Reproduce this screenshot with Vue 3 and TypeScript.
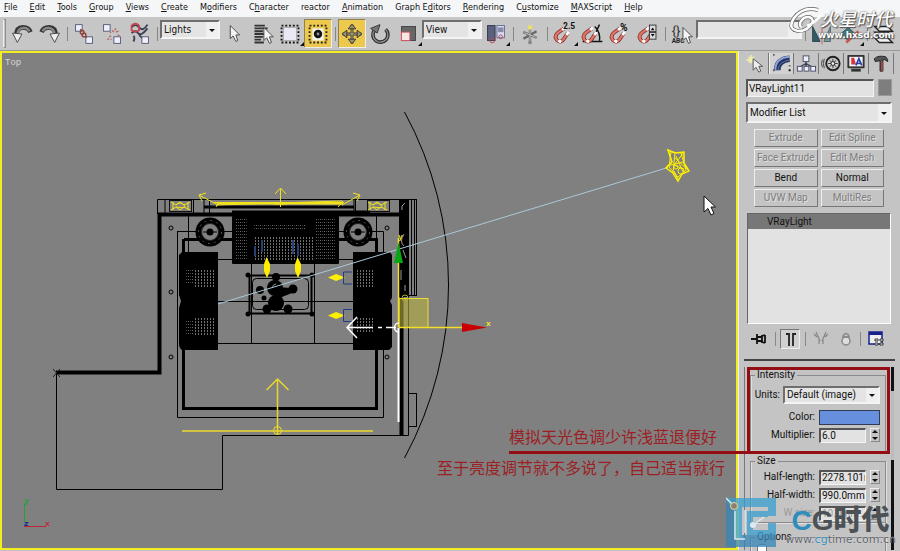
<script setup lang="ts">
import { ref } from 'vue'

interface Tool {
  kind: 'tool' | 'sep' | 'select' | 'combo'
  label?: string
  icon?: string
  active?: boolean
  flyout?: boolean
  value?: string
}

const menus: [string, string, string][] = [
  ['', 'F', 'ile'], ['', 'E', 'dit'], ['', 'T', 'ools'], ['', 'G', 'roup'], ['', 'V', 'iews'],
  ['', 'C', 'reate'], ['M', 'o', 'difiers'], ['C', 'h', 'aracter'], ['reactor', '', ''],
  ['', 'A', 'nimation'], ['Graph E', 'd', 'itors'], ['', 'R', 'endering'], ['C', 'u', 'stomize'],
  ['', 'M', 'AXScript'], ['', 'H', 'elp'],
]

const magnet = '<path d="M14 10L7 15Q3 19 7 23Q11 26 14 21L18 15" fill="none" stroke="#7a2a24" stroke-width="4"/><path d="M14 10L7 15Q3 19 7 23Q11 26 14 21L18 15" fill="none" stroke="#e0766a" stroke-width="2.500"/><path d="M12 11.500l3-2M16.500 17l2.500-3M8 23l3 1.500" stroke="#fff" stroke-width="3"/>'
const box = (x: number, y: number) => `<rect x="${x}" y="${y}" width="7" height="7" fill="#eef0fb" stroke="#565a78"/>`
const arrow = (x: number, y: number) => `<path transform="translate(${x} ${y})" d="M0 0V14L3 11L6 17L8 16L6 10H10Z" fill="#f4f4f4" stroke="#444"/>`

const icons: Record<string, string> = {
  undo: '<path d="M8 18Q8 9 15 9Q21 9 23 14" fill="none" stroke="#333" stroke-width="5"/><path d="M9 16Q10 10 15 9.500Q20 9 22 13" fill="none" stroke="#888" stroke-width="2.500"/><path d="M4 15L9 25L14 16Z" fill="#eee" stroke="#444"/>',
  redo: '<path d="M20 18Q20 9 13 9Q7 9 5 14" fill="none" stroke="#333" stroke-width="5"/><path d="M19 16Q18 10 13 9.500Q8 9 6 13" fill="none" stroke="#888" stroke-width="2.500"/><path d="M24 15L19 25L14 16Z" fill="#eee" stroke="#444"/>',
  link: box(5, 6) + box(16, 19) + '<g fill="none" stroke="#8f4340" stroke-width="1.500"><circle cx="12" cy="14" r="2"/><circle cx="14" cy="17" r="2"/><path d="M10 11l2 2M15 18l2 2"/></g>',
  unlink: box(5, 6) + box(16, 19) + '<path d="M14 12l2 2M18 10l-1 2M21 13l-3 1M20 17l2 1M12 14l1 1M11 19l2-1M9 22l2-1M13 22v-1" stroke="#b76a68" stroke-width="1.500"/>',
  bind: '<g fill="none" stroke="#3c4056" stroke-width="2"><path d="M5 9Q9 4 13 9T22 6M5 15Q9 11 12 15T22 10M7 24Q9 20 7 18M13 17l4 4"/></g><path d="M5 7Q9 3 13 7V12Q9 15 5 12Z" fill="none" stroke="#c5434b" stroke-width="1.800"/>' + box(16, 19),
  pick: arrow(10, 7),
  byname: '<path d="M6 7H17M6 10H20M6 13H15M6 16H17M6 19H15M6 22H13M6 25H16" stroke="#333" stroke-width="2"/>' + arrow(16, 9),
  region: '<rect x="7" y="9" width="14" height="14" fill="#e8e9f5" stroke="#aaa"/><rect x="5" y="7" width="18" height="18" fill="none" stroke="#111" stroke-width="2" stroke-dasharray="2 2"/>',
  crossing: '<rect x="8" y="10" width="12" height="13" fill="#f3f3e6"/><rect x="5" y="7" width="18" height="18" fill="none" stroke="#222" stroke-width="2" stroke-dasharray="2 2"/><circle cx="14" cy="16" r="4.500" fill="#111"/><circle cx="14" cy="16" r="1.500" fill="#8d93ad"/>',
  move: '<path d="M14 6V26M4 16H24" stroke="#333" stroke-width="3"/><path d="M14 6V26M4 16H24" stroke="#c9bd83"/><path d="M10 10.500L14 5.500L18 10.500ZM10 21.500L14 26.500L18 21.500ZM8.500 12L3.500 16L8.500 20ZM19.500 12L24.500 16L19.500 20Z" fill="#9b946f" stroke="#333"/>',
  rotate: '<path d="M8 12A8 8 0 1 0 20 11" fill="none" stroke="#333" stroke-width="4"/><path d="M8 12A8 8 0 1 0 20 11" fill="none" stroke="#999" stroke-width="1.200"/><path d="M4 10L14 6L11 15Z" fill="#777" stroke="#333"/>',
  scale: '<rect x="7" y="8" width="15" height="15" fill="#666" stroke="#444"/><rect x="7" y="14" width="9" height="9" fill="#f7e6e6" stroke="#d4525c"/>',
  pivot: '<rect x="5" y="7" width="8" height="16" fill="#59617c" stroke="#30364d"/><rect x="15" y="7" width="8" height="13" fill="#d7daf0" stroke="#666d96"/><path d="M16 9h6v5h-6z" fill="#868caa"/><circle cx="10" cy="23" r="2.500" fill="none" stroke="#bd4753"/><circle cx="19" cy="19" r="2" fill="none" stroke="#bd4753"/>',
  manip: '<path d="M14 9V25M7 14L21 20M7 21L21 13" stroke="#666" stroke-width="2.500"/><path d="M14 10V24M8 14.500L20 19.500" stroke="#ccc"/><circle cx="14" cy="9" r="2.500" fill="#e8e06a"/><circle cx="14" cy="25" r="2" fill="#888"/>',
  snap: magnet + '<text x="13" y="11" font-size="9" font-weight="700" fill="#111">2.5</text>',
  angle: '<path d="M4 24H25M14 23L22 6M22 23A18 18 0 0 0 17 8" fill="none" stroke="#111" stroke-width="1.500"/>' + magnet,
  percent: magnet + '<text x="14" y="13" font-size="11" font-weight="700" fill="#111">%</text>',
  spinner: magnet + '<rect x="15.500" y="6.500" width="7" height="7" fill="#ddd" stroke="#333"/><rect x="15.500" y="14.500" width="7" height="7" fill="#ddd" stroke="#333"/><path d="M17 12l2-3 2 3zM17 16l2 3 2-3z" fill="#111"/>',
  named: '<text x="3" y="17" font-size="14" fill="#333">{}</text><text x="3" y="26" font-size="7" font-weight="700" fill="#222">ABC</text>' + arrow(15, 9),
  mirror: '<path d="M4 8V24H12Z" fill="#345b63" stroke="#29464c"/><path d="M23 8V24H16Z" fill="#78969d" stroke="#4d6a70"/><path d="M14 5V27" stroke="#d0605c"/>',
  align: '<path d="M4 16L12 9L20 16L12 23Z" fill="#3f7a80" stroke="#28565b"/><path d="M10 25L23 13" stroke="#c65855" stroke-width="3"/>',
  layers: '<g fill="#f1f1f1" stroke="#222" stroke-width="1.500"><path d="M4 20h14l5 5H9z"/><path d="M4 14h14l5 5H9z"/><path d="M4 8h14l5 5H9z"/></g>',
}

const tools: Tool[] = [
  { kind: 'tool', label: 'Undo', icon: 'undo' },
  { kind: 'tool', label: 'Redo', icon: 'redo' },
  { kind: 'sep' },
  { kind: 'tool', label: 'Select and Link', icon: 'link' },
  { kind: 'tool', label: 'Unlink Selection', icon: 'unlink' },
  { kind: 'tool', label: 'Bind to Space Warp', icon: 'bind' },
  { kind: 'sep' },
  { kind: 'select', label: 'Selection Filter', value: 'Lights' },
  { kind: 'tool', label: 'Select Object', icon: 'pick' },
  { kind: 'tool', label: 'Select by Name', icon: 'byname' },
  { kind: 'tool', label: 'Selection Region', icon: 'region', flyout: true },
  { kind: 'tool', label: 'Window/Crossing', icon: 'crossing', active: true },
  { kind: 'sep' },
  { kind: 'tool', label: 'Select and Move', icon: 'move', active: true },
  { kind: 'tool', label: 'Select and Rotate', icon: 'rotate' },
  { kind: 'tool', label: 'Select and Scale', icon: 'scale', flyout: true },
  { kind: 'select', label: 'Reference Coordinate System', value: 'View' },
  { kind: 'tool', label: 'Use Pivot Point Center', icon: 'pivot', flyout: true },
  { kind: 'sep' },
  { kind: 'tool', label: 'Select and Manipulate', icon: 'manip' },
  { kind: 'sep' },
  { kind: 'tool', label: 'Snaps Toggle', icon: 'snap', flyout: true },
  { kind: 'tool', label: 'Angle Snap', icon: 'angle' },
  { kind: 'tool', label: 'Percent Snap', icon: 'percent' },
  { kind: 'tool', label: 'Spinner Snap', icon: 'spinner' },
  { kind: 'sep' },
  { kind: 'tool', label: 'Edit Named Selection Sets', icon: 'named' },
  { kind: 'combo', label: 'Named Selection Sets', value: '' },
  { kind: 'sep' },
  { kind: 'tool', label: 'Mirror', icon: 'mirror' },
  { kind: 'tool', label: 'Align', icon: 'align', flyout: true },
  { kind: 'sep' },
  { kind: 'tool', label: 'Layer Manager', icon: 'layers' },
]

const tabs = [
  { label: 'Create', icon: '<path d="M6 2v9M1 7h9M3 4l6 6M9 4l-6 6" stroke="#f5efb0" stroke-width="1.500"/><path d="M8 6V18L11 15L14 20L16 19L14 14H18Z" fill="#eee" stroke="#555"/>' },
  { label: 'Modify', icon: '<path d="M6 18Q6 7 19 6" fill="none" stroke="#26335e" stroke-width="7"/><path d="M4 18Q4 5 19 4" fill="none" stroke="#8fa3d8" stroke-width="2"/><path d="M7 18Q7 9 19 7.500" fill="none" stroke="#5d71ab"/><path d="M2 2h1M18 18h2M2 18h1M19 13v1" stroke="#111" stroke-width="2"/>' },
  { label: 'Hierarchy', icon: '<path d="M11 8V12M11 11L4 15M11 11L18 15M11 11V15" stroke="#3b3f55" stroke-width="1.500"/><g fill="#eceefa" stroke="#4c5068"><rect x="8" y="3" width="6" height="6"/><rect x="2" y="14" width="5" height="5"/><rect x="9" y="14" width="5" height="5"/><rect x="16" y="14" width="5" height="5"/></g>' },
  { label: 'Motion', icon: '<circle cx="13" cy="11" r="7" fill="#ccc" stroke="#222" stroke-width="2"/><path d="M13 6V16M8 11H18M9.500 7.500L16.500 14.500M16.500 7.500L9.500 14.500" stroke="#333"/><circle cx="13" cy="11" r="2" fill="#eee" stroke="#222"/><path d="M4 6Q2 11 4 16M2 7Q0 11 2 15" fill="none" stroke="#444"/>' },
  { label: 'Display', icon: '<rect x="2" y="2" width="18" height="14" rx="1" fill="#333"/><rect x="4" y="4" width="14" height="10" fill="#f4f4fb"/><path d="M6 5h3l2 7H6z" fill="#d6353c"/><path d="M11 13L14 6L17 13M12 11h4" fill="none" stroke="#2b3fa6" stroke-width="1.800"/><path d="M6 18h10" stroke="#333" stroke-width="3"/>' },
  { label: 'Utilities', icon: '<path d="M4 6Q8 2 16 4L18 7V9L15 7H13V19H10V8L5 9Z" fill="#555" stroke="#222"/><path d="M12 9V19" stroke="#b34b48" stroke-width="1.500"/>' },
]

const modifierButtons = [
  { label: 'Extrude', enabled: false }, { label: 'Edit Spline', enabled: false },
  { label: 'Face Extrude', enabled: false }, { label: 'Edit Mesh', enabled: false },
  { label: 'Bend', enabled: true }, { label: 'Normal', enabled: true },
  { label: 'UVW Map', enabled: false }, { label: 'MultiRes', enabled: false },
]

const stackTools = [
  { label: 'Pin Stack', pressed: false, icon: '<path d="M1 10H7M7 5V15M7 8H12M7 12H12M12 6V14M15 6V14M12 7L15 6M12 13L15 14" stroke="#111" stroke-width="1.800" fill="none"/>' },
  { label: 'Show end result', pressed: true, icon: '<path d="M5 4H8V16M15 4H12V16" stroke="#222" stroke-width="1.800" fill="none"/>' },
  { label: 'Make unique', pressed: false, icon: '<path d="M5 3L9 12M15 3L11 12M3 5l3 3M17 5l-3 3M8 11V15M12 11V15" stroke="#858585" stroke-width="1.200" fill="none"/>' },
  { label: 'Remove modifier', pressed: false, icon: '<circle cx="10" cy="12" r="4" stroke="#888" stroke-width="1.500" fill="#ddd"/><path d="M7 7Q10 2 13 7M6 8H14" stroke="#888" stroke-width="1.500" fill="none"/>' },
  { label: 'Configure Modifier Sets', pressed: false, icon: '<rect x="3" y="3" width="13" height="12" fill="#eee" stroke="#18208c" stroke-width="1.500"/><path d="M3 4.500H16" stroke="#18208c" stroke-width="3"/><path d="M9 10h3v2h-3zM14 10h3v2h-3zM9 14h3v2h-3zM14 14h3v2h-3z" fill="#fff" stroke="#333"/>' },
]

const objectName = ref('VRayLight11')
const multiplier = ref('6.0')
const sizes = ref([
  { id: 'half-length', label: 'Half-length:', value: '2278.101mm', dim: false },
  { id: 'half-width', label: 'Half-width:', value: '990.0mm', dim: false },
  { id: 'w-size', label: 'W size:', value: '10.0mm', dim: true },
])
const screws = [[171, 228], [171, 292], [171, 357], [387, 228], [387, 357]]
</script>

<template>
  <div class="app">
    <nav class="menubar">
      <a v-for="m in menus" :key="m.join('')" href="#">{{ m[0] }}<u v-if="m[1]">{{ m[1] }}</u>{{ m[2] }}</a>
    </nav>

    <header class="toolbar">
      <span class="grip"></span>
      <template v-for="(t, i) in tools" :key="i">
        <span v-if="t.kind === 'sep'" class="sep"></span>
        <button v-else-if="t.kind === 'tool'" class="tool" :class="{ active: t.active }" :aria-label="t.label">
          <svg viewBox="0 0 28 32" width="28" height="30" v-html="icons[t.icon!]"></svg>
          <i v-if="t.flyout" class="flyout"></i>
        </button>
        <span v-else class="drop" :class="t.kind">
          <select :aria-label="t.label"><option>{{ t.value }}</option></select>
          <i class="caret"></i>
        </span>
      </template>
      <div class="brand">
        <svg viewBox="0 0 34 28" width="34" height="28">
          <path d="M29 3Q14 -1 5 11Q-2 22 9 24Q20 24 24 14Q22 8 15 11Q9 16 12 20" fill="none" stroke="#666" stroke-width="4" />
          <path d="M29 3Q14 -1 5 11Q-2 22 9 24Q20 24 24 14Q22 8 15 11Q9 16 12 20M18 19Q26 16 32 8" fill="none" stroke="#fff" stroke-width="2.500" />
        </svg>
        <div class="brand-text"><b>火星时代</b><small>www.hxsd.com</small></div>
      </div>
    </header>

    <main class="work">
      <section class="viewport">
        <svg class="scene" viewBox="2 53 734 495" preserveAspectRatio="xMinYMin meet">
          <defs>
            <pattern id="mesh" width="3" height="3" patternUnits="userSpaceOnUse">
              <rect width="3" height="3" fill="#000" /><rect width="1" height="2" fill="#707070" />
            </pattern>
            <pattern id="mesh-fine" width="4" height="3" patternUnits="userSpaceOnUse">
              <rect width="4" height="3" fill="#000" /><rect width="1" height="1" fill="#666" /><rect x="2" width="1" height="1" fill="#444" />
            </pattern>
          </defs>

          <text x="5" y="65" class="view-name">Top</text>

          <!-- walls -->
          <g fill="none" stroke="#000">
            <path d="M157.500 214V199.500H416M56.500 373V489.500H222.500V435.500H408.500V199M193.500 200V213M204 200V213M209.500 200V213M355.500 200V213M400 200V213M165 200V213M354 200V213" />
            <path d="M56 372.500H159.500V214.500H400" stroke-width="4" />
            <path d="M401.500 297V435" stroke-width="4" />
            <rect x="408.500" y="199.500" width="8" height="96" /><path d="M411.500 200V295M414.500 200V295" />
            <rect x="408.500" y="393.500" width="8" height="33" />
            <path d="M404.500 112A362 362 0 0 1 404.500 458" />
            <path d="M177.500 231V417.500H383.500V231.500H177M188.500 216V252M376.500 216V252" />
            <path d="M184 239.500H376.500V408.500H183.500V239" stroke-width="3" />
            <path d="M251.500 263V343M314.500 263V343M218 301.500H353M218 343.500H353M218 259.500H232M339 259.500H353" />
            <path d="M53 369L60 377M60 369L53 377" stroke="#222" />
            <path d="M204 207H354M232 212H370" stroke-width="3" />
            <circle v-for="(s, i) in screws" :key="i" :cx="s[0]" :cy="s[1]" r="2" />
          </g>
          <path d="M399 200H408V297H399Z" />
          <path d="M402 210v-4l3-3M404 234q-5 8 0 12M403 250l3 8M401 270v10M405 285v6" fill="none" stroke="#999" />

          <!-- sofa and armchairs -->
          <rect x="232" y="216" width="107" height="48" rx="1" />
          <rect x="235" y="219" width="12" height="42" fill="url(#mesh-fine)" />
          <rect x="253" y="223" width="52" height="8" fill="url(#mesh-fine)" />
          <rect x="253" y="236" width="62" height="24" fill="url(#mesh)" />
          <rect x="316" y="219" width="20" height="42" fill="url(#mesh-fine)" />
          <path d="M255 246V256M262 240V252M293 240V254M298 244V256" stroke="#273f73" stroke-width="2" />
          <path d="M182 252H218V350H182Q179 348 179 344V308L181 301L179 295V255Z" />
          <path d="M353 252H390L392 255V298L390 301L392 305V347L389 350H353Z" />
          <rect x="186" y="270" width="7" height="15" fill="url(#mesh-fine)" /><rect x="195" y="269" width="20" height="18" fill="url(#mesh)" />
          <rect x="186" y="320" width="7" height="15" fill="url(#mesh-fine)" /><rect x="195" y="318" width="20" height="17" fill="url(#mesh)" />
          <rect x="357" y="269" width="17" height="18" fill="url(#mesh)" /><rect x="357" y="318" width="17" height="15" fill="url(#mesh)" />

          <!-- lamps -->
          <g v-for="x in [210, 358]" :key="x">
            <circle :cx="x" cy="232" r="14.500" /><circle :cx="x" cy="232" r="8.500" fill="#808080" stroke="#222" stroke-width="1" />
            <circle :cx="x" cy="232" r="11.500" fill="none" stroke="#555" stroke-dasharray="2 4" />
            <circle :cx="x" cy="232" r="3.500" /><path :d="`M${x - 7} 232H${x + 7}`" stroke="#000" stroke-width="1" />
          </g>

          <!-- coffee table -->
          <rect x="249.500" y="275.500" width="62" height="38" fill="none" stroke="#000" stroke-width="2" />
          <rect x="252.500" y="278.500" width="56" height="31" rx="4" fill="none" stroke="#000" />
          <circle v-for="(p, i) in [[248, 275], [312, 275], [248, 314], [312, 314]]" :key="i" :cx="p[0]" :cy="p[1]" r="2.500" />
          <g>
            <circle cx="276" cy="277" r="4" /><circle cx="275" cy="288" r="8" /><circle cx="260" cy="290" r="4" />
            <circle cx="293" cy="289" r="4.500" /><circle cx="264" cy="298" r="2.500" /><circle cx="276" cy="303" r="8" />
            <circle cx="267" cy="309" r="4.500" /><circle cx="288" cy="309" r="4.500" /><path d="M277 287L291 288L292 293L277 299Z" />
          </g>
          <path d="M272 288q1-4 4-4" fill="none" stroke="#888" />

          <!-- target line of the selected light -->
          <path d="M218 304L668 167.500" stroke="#a9cad9" fill="none" />

          <!-- small lights -->
          <g fill="#ffee00">
            <path d="M266.500 257L270 264V271L267 278L264 271V264Z" /><path d="M297.500 257L301 264V271L298 278L295 271V264Z" />
            <path d="M328 277.500L336 274L345 277.500L336 281Z" /><path d="M328 315.500L336 312L345 315.500L336 319Z" />
          </g>
          <path d="M352 272H343.500V284H352M352 309.500H343.500V321.500H352" fill="none" stroke="#1f3c85" />

          <!-- yellow window lights -->
          <g fill="none" stroke="#f2e21c">
            <rect x="169.500" y="200.500" width="22" height="11" stroke="#111" /><rect x="367.500" y="200.500" width="22" height="11" stroke="#111" />
            <path d="M171 202L176 205L180 202L184 205L190 202M171 210L176 207L180 210L184 207L190 210M173 202V210M188 202V210M176 205Q180 201 184 205T176 207" />
            <path d="M368 202L373 205L377 202L381 205L387 202M368 210L373 207L377 210L381 207L387 210M370 202V210M385 202V210M373 205Q377 201 381 205T373 207" />
            <path d="M214 202.500H344M216 205L342 201M216 207L219 202M338 207L343 201" /><path d="M217 203.500H343" stroke-width="2" />
            <path d="M280.500 207V189M275 194L280.500 188L286 194M274 204H287" />
            <path d="M218 205L199 195M206 193L199 195L202 201M342 205L360 195M353 193L360 195L357 201" />
            <path d="M182 431H373M277.500 434V379M266.500 390L277.500 379L288.500 390" stroke-width="1.500" stroke="#e8d72b" />
            <circle cx="277.500" cy="430.500" r="4" />
          </g>

          <!-- target star -->
          <g fill="none" stroke="#fff000">
            <path d="M668 150L675 153L684 152L684 163L689 171L682 174L678 181L673 173L666 168L672 162Z" stroke-width="1.500" />
            <path d="M668 150L672 162M675 153L673 172M684 152L674 165L684 169M676 156L683 172M667 166L683 162M678 179L674 171M671 152L681 153L686 170L678 177L669 167Z M674 157L689 171" />
            <circle cx="681" cy="171" r="3" /><circle cx="676" cy="167" r="2" />
          </g>

          <!-- move gizmo -->
          <path d="M398.500 328V422" stroke="#fff" stroke-width="2" />
          <rect x="399" y="298.500" width="29" height="29" fill="#b7b13d" fill-opacity=".6" stroke="#e9df30" />
          <path d="M398.500 327V238M399 327.500H463" stroke="#f3df25" stroke-width="1.500" />
          <circle cx="405" cy="298" r="3" fill="none" stroke="#b6aa29" />
          <path d="M398.500 242L403 263H394Z" fill="#08a514" /><path d="M462 323V332L487 327.500Z" fill="#c90000" />
          <path d="M347 327.500H373M378 327.500H382M386 327.500H396M357 317L347 327.500L357 338M399 323A4 4 0 0 0 399 332" fill="none" stroke="#fff" stroke-width="1.500" />
          <text x="398" y="239" class="axis yellow">y</text><text x="486" y="326" class="axis yellow">x</text>

          <!-- world axis -->
          <path d="M24.500 526V503" stroke="#25a036" /><path d="M24 526.500H46" stroke="#c02734" />
          <text x="24" y="503" class="axis green">y</text><text x="45" y="526" class="axis red">x</text><text x="24" y="526" class="axis blue">z</text>

          <path d="M704 196V212L708 208.500L711 215L714 213.500L711 207H715.500Z" fill="#fff" stroke="#111" />
        </svg>
      </section>

      <aside class="panel">
        <div class="tabs">
          <button v-for="(t, i) in tabs" :key="t.label" :class="{ on: i === 1 }" :aria-label="t.label">
            <svg viewBox="0 0 22 22" width="22" height="21" v-html="t.icon"></svg>
          </button>
        </div>
        <div class="name-row">
          <input v-model="objectName" class="sunk" aria-label="Object name" />
          <button class="object-color" aria-label="Object color"></button>
        </div>
        <span class="drop modifiers">
          <select aria-label="Modifier List"><option>Modifier List</option></select><i class="caret"></i>
        </span>
        <div class="mod-grid">
          <button v-for="b in modifierButtons" :key="b.label" :disabled="!b.enabled">{{ b.label }}</button>
        </div>
        <ul class="stack"><li>VRayLight</li></ul>
        <div class="stack-tools">
          <template v-for="(s, i) in stackTools" :key="s.label">
            <button :class="{ pressed: s.pressed }" :aria-label="s.label">
              <svg viewBox="0 0 20 20" width="20" height="20" v-html="s.icon"></svg>
            </button>
            <span v-if="i !== 2 && i !== 4" class="bar"></span>
          </template>
        </div>

        <div class="rollouts">
          <div class="params">
            <div class="callout-host">
              <fieldset>
                <legend>Intensity</legend>
                <div class="row units">
                  <label for="units">Units:</label>
                  <span class="drop"><select id="units"><option>Default (image)</option></select><i class="caret"></i></span>
                </div>
                <div class="row">
                  <label for="color">Color:</label><button id="color" class="color"></button>
                </div>
                <div class="row">
                  <label for="mult">Multiplier:</label>
                  <input id="mult" v-model="multiplier" class="sunk" /><span class="spin"></span>
                </div>
              </fieldset>
              <div class="callout"></div>
              <div class="note">
                <p>模拟天光色调少许浅蓝退便好</p>
                <p>至于亮度调节就不多说了，自己适当就行</p>
              </div>
            </div>
            <fieldset>
              <legend>Size</legend>
              <div v-for="s in sizes" :key="s.id" class="row" :class="{ dim: s.dim }">
                <label :for="s.id">{{ s.label }}</label>
                <input :id="s.id" v-model="s.value" class="sunk" :disabled="s.dim" /><span class="spin"></span>
              </div>
            </fieldset>
            <fieldset class="options">
              <legend>Options</legend>
              <input type="checkbox" aria-label="Double-sided" />
            </fieldset>
          </div>
          <div class="scroll"></div>
        </div>
      </aside>

      <div class="watermark">
        <svg viewBox="0 0 50 50" width="50" height="50">
          <g fill="#3a9fd0" fill-opacity=".75">
            <path d="M0 1H50V19H42V10H16V41H8V12L0 4Z" />
            <path d="M0 4L8 12V41H16V38H50V50H0Z" fill="#3585b8" />
            <path d="M21 14H42V20H27V33H42V26H50V38H21Z" />
          </g>
          <path d="M0 1L9 10M9 14V42H19M19 13V36M27 28L38 20" fill="none" stroke="#d9eaf1" stroke-width="1.500" />
          <circle cx="8" cy="9" r="3.500" fill="#8b8072" stroke="#e3dba0" /><circle cx="27" cy="28" r="3" fill="#dcebf1" />
        </svg>
        <div class="mark-text">
          <strong><em>C</em>G时代</strong>
          <span>www.<em>cg</em>time.com.cn</span>
        </div>
      </div>
    </main>
  </div>
</template>

<style>
body { overflow: hidden; background: #c4c4c4; }
</style>

<style scoped>
* { box-sizing: border-box; }
.app {
  display: flex; flex-direction: column; height: 100vh; overflow: hidden;
  font: 10px/14px Roboto, "Noto Sans CJK SC", sans-serif; color: #111; background: #c4c4c4;
}
button, input, select { font: inherit; color: inherit; margin: 0; padding: 0; border: 0; border-radius: 0; background: none; }
svg { display: block; flex: none; }

.menubar { display: flex; gap: 12px; padding: 0 4px; height: 17px; flex: none; background: #f5f6f8; white-space: nowrap; font: 9px/15px "DejaVu Sans Condensed", "DejaVu Sans", sans-serif; }
.menubar a { color: #111; text-decoration: none; }

.toolbar { position: relative; display: flex; align-items: flex-start; height: 34px; flex: none; padding: 2px 0 0 3px; background: #c6c6c6; border-bottom: 1px solid #999; }
.grip { width: 3px; height: 29px; margin-right: 2px; border: 1px solid #8d8d8d; border-left-color: #eee; }
.sep { width: 6px; height: 14px; margin-top: 8px; background: linear-gradient(#858585, #858585) 3px 0 / 1px 100% no-repeat; }
.tool { position: relative; width: 28px; height: 29px; flex: none; }
.tool.active { background: #ecc84c; border: 1px solid #8d8253; border-right-color: #eee; border-bottom-color: #eee; }
.tool.active svg { margin: -1px; }
.flyout { position: absolute; right: 0; bottom: 2px; border: 2px solid #111; border-top-color: transparent; border-left-color: transparent; }

.drop { position: relative; display: flex; flex: none; background: #e4e4e4; border: 2px solid; border-color: #6e6e6e #f4f4f4 #f4f4f4 #6e6e6e; }
.toolbar .drop { width: 60px; height: 19px; margin-top: 1px; }
.toolbar .combo { width: 106px; }
.drop select { flex: 1; min-width: 0; appearance: none; padding-left: 2px; outline: none; }
.toolbar .select select { font: 10px/14px "DejaVu Sans Condensed", "DejaVu Sans", sans-serif; }
.caret { position: absolute; right: 0; top: 0; bottom: 0; width: 12px; background: #f0f0f0; pointer-events: none; }
.caret::after { content: ""; position: absolute; left: 3px; top: 50%; margin-top: -1px; border: 3px solid transparent; border-top-color: #111; }

.brand { position: absolute; right: 6px; top: -10px; display: flex; align-items: flex-start; color: #fff; text-shadow: 0 0 2px #444, 1px 1px 1px #555; font-style: italic; pointer-events: none; }
.brand svg { margin-right: -5px; }
.brand-text { display: flex; flex-direction: column; align-items: center; padding-top: 2px; }
.brand b { font-size: 18px; line-height: 21px; font-weight: 500; }
.brand small { font: 700 9px/10px "DejaVu Sans", sans-serif; }

.work { position: relative; flex: 1; min-height: 0; display: flex; padding-bottom: 1px; }
.viewport { flex: 1; min-width: 0; border: 2px solid #f0ee20; background: #808080; }
.scene { width: 100%; height: 100%; }
.view-name { font: 9px "Liberation Mono", monospace; fill: #d8d8d8; }
.axis { font: 700 8px "Liberation Mono", monospace; }
.yellow { fill: #f4e52c; } .green { fill: #25a036; } .red { fill: #c02734; } .blue { fill: #10139c; }

.panel { width: 162px; flex: none; display: flex; flex-direction: column; padding: 2px 5px 0; border-left: 1px solid #eee; background: #c4c4c4; }
.tabs { display: flex; }
.tabs button { width: 25px; height: 21px; display: flex; justify-content: center; border-right: 1px solid #777; }
.tabs .on { background: #d2d2d2; border-left: 1px solid #eee; }
.name-row { display: flex; gap: 4px; margin: 5px 3px 0 2px; }
.sunk { min-width: 0; background: #e2e2e2; border: 1px solid; border-color: #555 #f4f4f4 #f4f4f4 #555; border-width: 2px 1px 1px 2px; padding-left: 1px; outline: none; }
.name-row .sunk { flex: 1; height: 18px; }
.object-color { width: 14px; height: 17px; background: #7e7e7e; border: 1px solid #999; }
.modifiers { height: 21px; margin: 5px 3px 0 2px; }
.mod-grid { display: grid; grid-template-columns: 1fr 1fr; gap: 2px 3px; margin: 6px 11px 0 10px; }
.mod-grid button { height: 18px; border: 1px solid; border-color: #eee #777 #777 #eee; white-space: nowrap; }
.mod-grid button:disabled { color: #7d7d7d; text-shadow: 1px 1px #e0e0e0; }
.stack { height: 111px; margin: 6px 4px 0 3px; padding: 0; list-style: none; background: #e2e2e2; border: 1px solid; border-color: #666 #fff #fff #666; }
.stack li { height: 15px; line-height: 15px; padding-left: 19px; background: #777; }
.stack-tools { display: flex; align-items: center; justify-content: space-between; height: 20px; margin: 5px 9px 0 6px; }
.stack-tools button { width: 20px; height: 20px; display: grid; place-items: center; }
.stack-tools .pressed { border: 1px solid; border-color: #777 #eee #eee #777; background: #d0d0d0; }
.bar { width: 1px; height: 14px; background: #888; }

.rollouts { flex: 1; min-height: 0; display: flex; margin-top: 10px; border-top: 2px solid #444; padding-top: 6px; }
.params { flex: 1; min-width: 0; border-left: 1px solid #777; padding: 0 1px 0 2px; }
.scroll { width: 3px; margin-right: 1px; background: linear-gradient(#111 24px, #bbb 24px, #bbb 93px, #111 93px); }
.callout-host { position: relative; height: 87px; padding-top: 1px; }
.callout { position: absolute; inset: 0; border: 3px solid #930d12; pointer-events: none; }
.note { position: absolute; right: 100%; top: 59px; width: 238px; pointer-events: none; font: 16px/21px "Noto Sans CJK SC", sans-serif; color: #9c1f24; white-space: nowrap; }
.note p { margin: 0; }
.note p:first-child { border-bottom: 3px solid #930d12; height: 28px; }
.note p:last-child { display: flex; justify-content: flex-end; padding: 3px 22px 0 0; }

fieldset { margin: 0 4px 0 3px; padding: 0 5px 0 0; min-width: 0; border: 1px solid #8a8a8a; box-shadow: inset 1px 0 #e0e0e0, 1px 1px #e0e0e0; }
.callout-host fieldset { height: 83px; border-bottom: 0; box-shadow: inset 1px 0 #e0e0e0; }
legend { margin-left: 4px; padding: 0 2px; line-height: 14px; }
.row { display: flex; align-items: center; justify-content: flex-end; gap: 4px; height: 18px; }
.row label { white-space: nowrap; }
.row .sunk { width: 47px; height: 15px; }
.units { gap: 3px; height: 20px; margin: 3px 0; }
.units .drop { width: 97px; height: 18px; }
.color { width: 61px; height: 15px; background: #668fdd; border: 1px solid #333c55; }
.spin { position: relative; width: 10px; height: 14px; border: 1px solid; border-color: #eee #888 #888 #eee; }
.spin::before, .spin::after { content: ""; position: absolute; left: 1px; border: 3px solid transparent; }
.spin::before { top: -2px; border-bottom-color: #111; }
.spin::after { bottom: -2px; border-top-color: #111; }
.dim { color: #999; }
.options { margin-top: 7px; }
.options input { display: block; width: 10px; height: 10px; margin-left: 6px; }

.watermark { position: absolute; right: 4px; bottom: 4px; display: flex; gap: 9px; align-items: flex-end; pointer-events: none; }
.mark-text { display: flex; flex-direction: column; align-items: center; color: #4c5155; }
.mark-text strong { font: 900 28px/25px "Liberation Sans", "Noto Sans CJK SC", sans-serif; white-space: nowrap; }
.mark-text span { font: 11px/14px "DejaVu Sans", sans-serif; color: #5f666b; text-shadow: 0 0 1px #eee; }
.mark-text em { font-style: normal; color: #2f8dbd; }
</style>
